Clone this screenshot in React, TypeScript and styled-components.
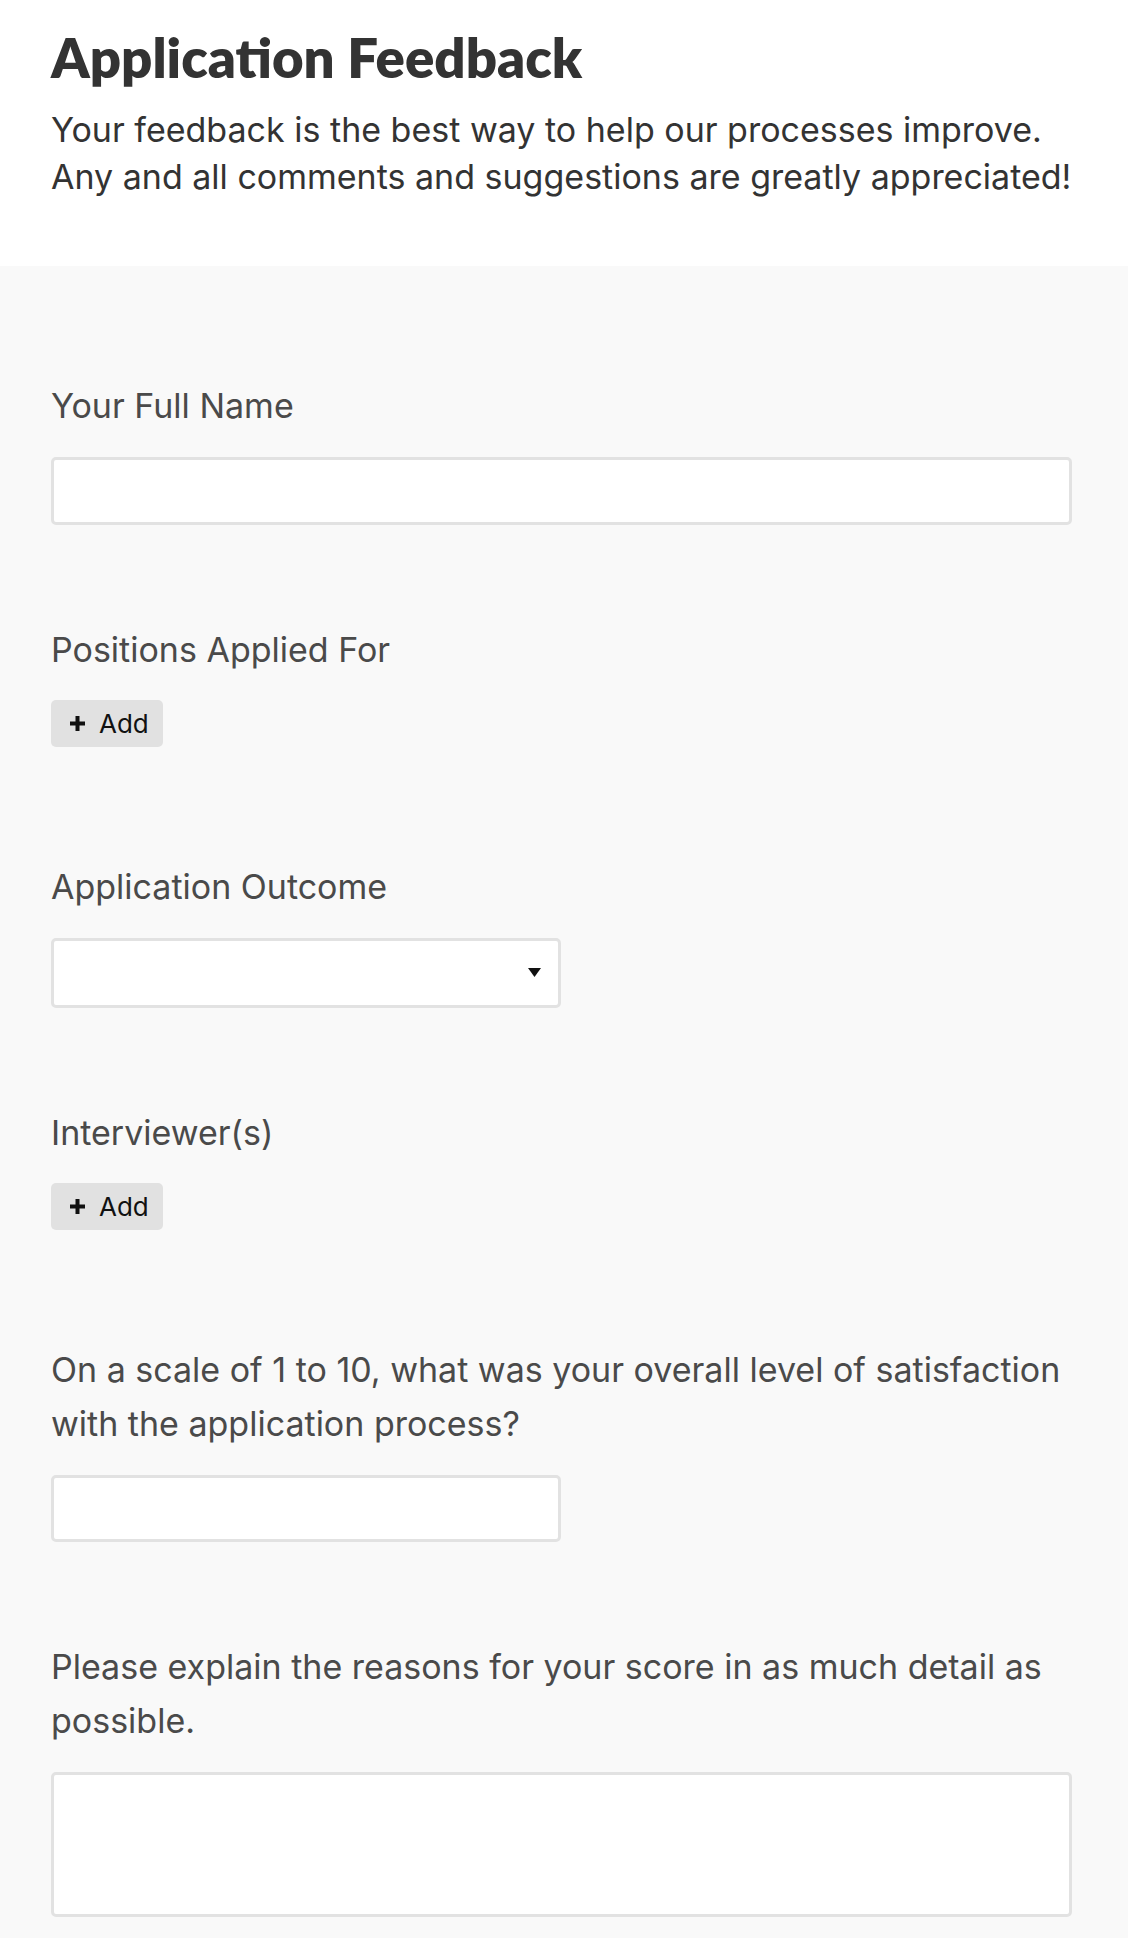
import React from "react";
import styled, { createGlobalStyle } from "styled-components";

const GlobalStyle = createGlobalStyle`
  html, body {
    margin: 0;
    padding: 0;
  }
  body {
    background: #f9f9f9;
    font-family: Inter, "Noto Sans", Arial, sans-serif;
    -webkit-font-smoothing: antialiased;
  }
  *, *::before, *::after {
    box-sizing: border-box;
  }
`;

const Page = styled.div`
  min-height: 1938px;
  display: flex;
  flex-direction: column;
  background: #f9f9f9;
`;

const Header = styled.header`
  background: #ffffff;
  padding: 25px 56px 66px 51px;
`;

const Title = styled.h1`
  margin: 0;
  font-family: Lato, "Open Sans", sans-serif;
  font-weight: 800;
  font-size: 54.5px;
  line-height: 64px;
  color: #333333;
`;

const Intro = styled.p`
  margin: 17px 0 0;
  font-size: 34px;
  line-height: 47px;
  color: #333333;
`;

const Form = styled.form`
  display: flex;
  flex-direction: column;
  gap: 98px;
  padding: 113px 56px 40px 51px;
`;

const Field = styled.div`
  display: flex;
  flex-direction: column;
  align-items: flex-start;
  gap: 24px;
`;

const Label = styled.label`
  display: block;
  font-size: 34px;
  line-height: 54px;
  color: #4a4a4a;
`;

const boxStyles = `
  display: block;
  background: #ffffff;
  border: 3px solid #e2e2e2;
  border-radius: 5px;
  outline: none;
  font-family: Inter, Arial, sans-serif;
  font-size: 28px;
  color: #333;
  padding: 0 16px;
`;

const TextInput = styled.input<{ $wide?: boolean }>`
  ${boxStyles}
  width: ${(p) => (p.$wide ? "1021px" : "510px")};
  height: ${(p) => (p.$wide ? "68px" : "67px")};
`;

const TextArea = styled.textarea`
  ${boxStyles}
  width: 1021px;
  height: 145px;
  resize: none;
  padding: 12px 16px;
`;

const SelectWrap = styled.div`
  position: relative;
  width: 510px;
  height: 70px;
`;

const Select = styled.select`
  ${boxStyles}
  appearance: none;
  -webkit-appearance: none;
  width: 100%;
  height: 100%;
`;

const Caret = styled.svg`
  position: absolute;
  right: 20px;
  top: 30px;
  width: 13px;
  height: 9px;
  pointer-events: none;
`;

const AddRow = styled.div`
  padding-bottom: 15px;
  margin-top: -1px;
`;

const AddButton = styled.button`
  display: inline-flex;
  align-items: center;
  gap: 14px;
  height: 47px;
  width: 112px;
  padding: 0 0 0 19px;
  border: none;
  border-radius: 5px;
  background: #e1e1e1;
  color: #111111;
  font-family: Inter, Arial, sans-serif;
  font-size: 26px;
  cursor: pointer;
`;

const PlusIcon = styled.svg`
  width: 15px;
  height: 15px;
  flex: none;
`;

function AddField({ label, id }: { label: string; id: string }) {
  return (
    <Field>
      <Label htmlFor={id}>{label}</Label>
      <AddRow>
        <AddButton type="button" id={id}>
          <PlusIcon viewBox="0 0 15 15" aria-hidden="true">
            <path d="M7.5 0 V15 M0 7.5 H15" stroke="#111" strokeWidth="4" />
          </PlusIcon>
          Add
        </AddButton>
      </AddRow>
    </Field>
  );
}

export default function App() {
  return (
    <Page>
      <GlobalStyle />
      <Header>
        <Title>Application Feedback</Title>
        <Intro>
          Your feedback is the best way to help our processes improve.
          <br />
          Any and all comments and suggestions are greatly appreciated!
        </Intro>
      </Header>
      <Form onSubmit={(e) => e.preventDefault()}>
        <Field>
          <Label htmlFor="name">Your Full Name</Label>
          <TextInput id="name" type="text" $wide />
        </Field>
        <AddField label="Positions Applied For" id="positions" />
        <Field>
          <Label htmlFor="outcome">Application Outcome</Label>
          <SelectWrap>
            <Select id="outcome" defaultValue="">
              <option value=""></option>
              <option value="offer">Offer</option>
              <option value="rejected">Rejected</option>
            </Select>
            <Caret viewBox="0 0 13 9" aria-hidden="true">
              <path d="M0 0 H13 L6.5 9 Z" fill="#111" />
            </Caret>
          </SelectWrap>
        </Field>
        <AddField label="Interviewer(s)" id="interviewers" />
        <Field>
          <Label htmlFor="score">
            On a scale of 1 to 10, what was your overall level of satisfaction
            <br />
            with the application process?
          </Label>
          <TextInput id="score" type="text" />
        </Field>
        <Field>
          <Label htmlFor="reasons">
            Please explain the reasons for your score in as much detail as
            <br />
            possible.
          </Label>
          <TextArea id="reasons" />
        </Field>
      </Form>
    </Page>
  );
}
